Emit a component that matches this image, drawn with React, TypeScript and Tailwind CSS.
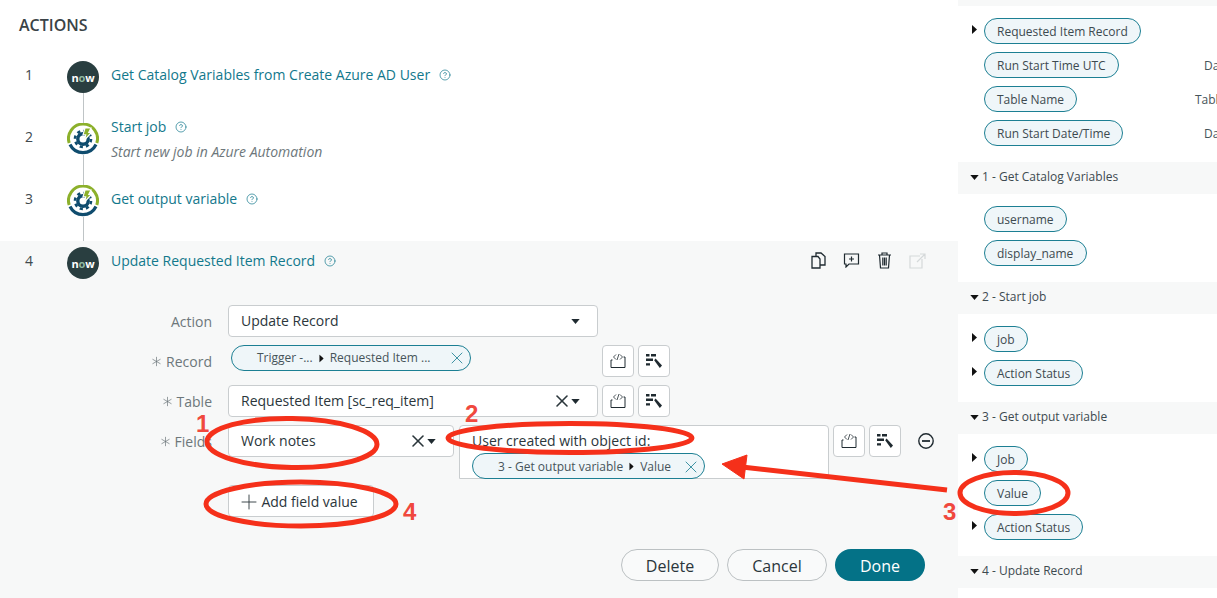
import { Asterisk, CircleHelp, Plus, X } from "lucide-react";
import { ReactNode } from "react";

const NowIcon = () => (
  <div className="w-8 h-8 shrink-0 rounded-full bg-[#293e40] flex items-center justify-center text-white text-[11px] font-bold leading-none tracking-[-0.2px]">
    n<span className="text-[#8fb8a0]">o</span>w
  </div>
);

const AutomationIcon = () => (
  <svg viewBox="0 0 32 32" className="w-8 h-8 shrink-0">
    <circle cx="16" cy="16" r="16" fill="#fff" />
    <path d="M2.2 20 A14.5 14.5 0 1 1 29.8 20" fill="none" stroke="#8cb02b" strokeWidth="3" />
    <path d="M3 21.5 A14.5 14.5 0 0 0 29 21.5" fill="none" stroke="#0f4c6e" strokeWidth="3.2" />
    <circle cx="16" cy="16" r="5.2" fill="none" stroke="#0f4c6e" strokeWidth="3.4" />
    <circle cx="16" cy="16" r="8" fill="none" stroke="#0f4c6e" strokeWidth="2.6" strokeDasharray="3.2 3.1" />
    <path d="M18 5h6l-2.2 4.5h2.7L17.5 17l1.2-5.2H16z" fill="#8cb02b" stroke="#fff" strokeWidth="1.2" />
  </svg>
);

const Help = () => <CircleHelp size={12} strokeWidth={1.4} className="text-[#12788c] shrink-0" />;

const Caret = ({ className = "text-[#1f2a30]" }: { className?: string }) => (
  <svg viewBox="0 0 10 6" className={`w-[9px] h-[5px] shrink-0 fill-current ${className}`}>
    <path d="M0 0h10L5 6z" />
  </svg>
);

const SideCaret = () => (
  <svg viewBox="0 0 5 9" className="w-[5px] h-[9px] fill-[#111]">
    <path d="M0 0l5 4.5L0 9z" />
  </svg>
);

const CodeIcon = () => (
  <svg viewBox="0 0 16 14" className="w-4 h-[14px] fill-none stroke-[#1f2a30]" strokeWidth="1">
    <path d="M2.5 6H1v7.5h14V3h-1.5" />
    <path d="M6 0.5L3.5 3L6 5.5M10 0.5L12.5 3L10 5.5M9 0L7 6" strokeWidth="0.8" />
  </svg>
);

const WandIcon = () => (
  <svg viewBox="0 0 16 14" className="w-4 h-[14px] fill-[#1f2a30]">
    <path d="M0 0h3.5v2.4H0zM5 0h5v2.4H5zM0 4.6h7v2.4H0zM0 9.2h4v2.4H0z" />
    <path d="M8.2 6.2L9.6 4.6 16 11.6 13.8 14z" />
  </svg>
);

const ToolButton = ({ children }: { children: ReactNode }) => (
  <div className="w-8 h-8 shrink-0 bg-white border border-[#c9cdcf] rounded flex items-center justify-center">
    {children}
  </div>
);

const ToolPair = () => (
  <div className="flex gap-1">
    <ToolButton>
      <CodeIcon />
    </ToolButton>
    <ToolButton>
      <WandIcon />
    </ToolButton>
  </div>
);

const Step = ({
  n,
  icon,
  first,
  active,
  children,
  textClass,
}: {
  n: number;
  icon: ReactNode;
  first?: boolean;
  active?: boolean;
  children: ReactNode;
  textClass: string;
}) => (
  <div className="h-[62px] flex pl-[25px]">
    <div className="w-[42px] pt-[10px] text-sm leading-5 text-[#40494d]">{n}</div>
    <div className="w-8 flex flex-col items-center">
      <div className={`w-px h-[6px] ${first ? "" : "bg-[#bfc4c6]"}`} />
      {icon}
      {!active && <div className="w-px flex-1 bg-[#bfc4c6]" />}
    </div>
    <div className={`ml-3 ${textClass}`}>{children}</div>
  </div>
);

const Title = ({ children }: { children: ReactNode }) => (
  <div className="flex items-center gap-[9px] text-sm leading-5 text-[#12788c]">
    <span>{children}</span>
    <Help />
  </div>
);

const Label = ({ text, required }: { text: string; required?: boolean }) => (
  <div className="w-[212px] shrink-0 h-8 pt-px flex items-center justify-end gap-[1px] text-sm text-[#6d777b]">
    {required && <Asterisk size={17} strokeWidth={1} />}
    {text}
  </div>
);

const Select = ({ text, width, clear }: { text: string; width: string; clear?: boolean }) => (
  <div className={`${width} h-8 shrink-0 bg-white border border-[#c9cdcf] rounded flex items-center pl-3 pr-[17px] text-sm text-[#2b363b]`}>
    <span className="flex-1">{text}</span>
    {clear && <X size={20} strokeWidth={1.9} className="text-[#2b363b] mr-[-1px]" />}
    <Caret />
  </div>
);

const PillChip = ({ parts, className }: { parts: string[]; className: string }) => (
  <div className={`h-[26px] rounded-full border border-[#1c7f93] bg-[#eff6f9] flex items-center text-xs text-[#46545a] ${className}`}>
    <span>{parts[0]}</span>
    <span className="mx-[6px] scale-90">
      <SideCaret />
    </span>
    <span className="flex-1">{parts[1]}</span>
    <X size={20} strokeWidth={1} className="text-[#1c7f93] mr-[3px]" />
  </div>
);

const Pill = ({
  name,
  width,
  expand,
  type,
  typeOffset,
}: {
  name: string;
  width: string;
  expand?: boolean;
  type?: string;
  typeOffset?: string;
}) => (
  <div className="h-[26px] flex items-center">
    <div className="w-[12px] ml-[14px] shrink-0 -mt-1">{expand && <SideCaret />}</div>
    <div className={`${width} shrink-0 h-[26px] rounded-full border border-[#1c7f93] bg-[#eff6f9] flex items-center pl-[12px] pt-px text-xs text-[#3d4a50] whitespace-nowrap`}>
      {name}
    </div>
    {type && <div className={`${typeOffset} pt-px text-xs text-[#46545a] whitespace-nowrap`}>{type}</div>}
  </div>
);

const Section = ({ title, children }: { title: string; children: ReactNode }) => (
  <>
    <div className="h-8 bg-[#f7f8f8] flex items-center pl-3 pb-[2px] gap-[3px] text-xs text-[#3d4a50]">
      <Caret className="text-[#111]" />
      {title}
    </div>
    <div className="pt-3 pb-4 flex flex-col gap-2">{children}</div>
  </>
);

const Num = ({ children, className }: { children: ReactNode; className: string }) => (
  <span className={`absolute font-['Liberation_Sans',sans-serif] font-bold text-2xl leading-none text-[#f0483e] ${className}`}>
    {children}
  </span>
);

export default function App() {
  return (
    <div className="relative w-[1217px] h-[598px] overflow-hidden flex bg-white font-['Open_Sans',sans-serif]">
      <main className="w-[958px] shrink-0 flex flex-col">
        <h2 className="h-[55px] pl-[19px] pt-[15px] text-base leading-5 font-semibold text-[#3a4347]">ACTIONS</h2>
        <Step n={1} first icon={<NowIcon />} textClass="pt-[10px]">
          <Title>Get Catalog Variables from Create Azure AD User</Title>
        </Step>
        <Step n={2} icon={<AutomationIcon />} textClass="">
          <Title>Start job</Title>
          <p className="mt-[5px] text-sm leading-5 italic text-[#6d777b]">Start new job in Azure Automation</p>
        </Step>
        <Step n={3} icon={<AutomationIcon />} textClass="pt-[10px]">
          <Title>Get output variable</Title>
        </Step>

        <section className="flex-1 bg-[#f7f8f8] flex flex-col">
          <div className="flex items-start">
            <div className="flex-1">
              <Step n={4} first active icon={<NowIcon />} textClass="pt-[10px]">
                <Title>Update Requested Item Record</Title>
              </Step>
            </div>
            <div className="flex items-center gap-[17px] pt-[11px] pr-[32px] text-[#1f2a30]">
              <svg viewBox="0 0 15 17" className="w-[15px] h-[17px] fill-none stroke-current" strokeWidth="1.3">
                <path d="M1 4.5h6l2 2.5v9H1zM5 4.5V1h5l4 3.5V13H9" />
              </svg>
              <svg viewBox="0 0 17 15" className="w-[17px] h-[15px] fill-none stroke-current" strokeWidth="1.2">
                <path d="M1.5 1h14v10H6l-3 3v-3H1.5zM8.5 3.5v5M6 6h5" />
              </svg>
              <svg viewBox="0 0 15 17" className="w-[15px] h-[17px] fill-none stroke-current" strokeWidth="1.2">
                <path d="M1 3h13M5 3V1h5v2M2.5 3l1 13h8l1-13M5.8 5.5v8M7.5 5.5v8M9.2 5.5v8" />
              </svg>
              <svg viewBox="0 0 17 16" className="w-[17px] h-4 fill-none stroke-[#d5d9da]" strokeWidth="1.2">
                <path d="M11 3H1v12h12V6M8 9L16 1M11 1h5v5" />
              </svg>
            </div>
          </div>

          <div className="mt-[2px] flex flex-col gap-2">
            <div className="flex gap-4">
              <Label text="Action" />
              <Select text="Update Record" width="w-[370px]" />
            </div>
            <div className="flex gap-4">
              <Label text="Record" required />
              <div className="w-[374px] shrink-0 pl-[3px]">
                <PillChip parts={["Trigger -...", "Requested Item ..."]} className="w-[240px] pl-[25px]" />
              </div>
              <div className="ml-[-16px]">
                <ToolPair />
              </div>
            </div>
            <div className="flex gap-4">
              <Label text="Table" required />
              <div className="flex gap-1">
                <Select text="Requested Item [sc_req_item]" width="w-[370px]" clear />
                <ToolPair />
              </div>
            </div>
            <div className="flex gap-4">
              <Label text="Fields" required />
              <div className="flex gap-[5px]">
                <Select text="Work notes" width="w-[226px]" clear />
                <div className="w-[370px] h-[54px] bg-white border border-[#c9cdcf] rounded-t pl-3 pt-[5px]">
                  <div className="text-sm leading-5 text-[#2b363b]">User created with object id:</div>
                  <PillChip parts={["3 - Get output variable", "Value"]} className="w-[233px] pl-[25px] pt-px mt-[2px]" />
                </div>
                <div className="ml-[-1px] flex gap-1">
                  <ToolPair />
                </div>
                <div className="ml-[12px] h-8 flex items-center">
                  <svg viewBox="0 0 16 16" className="w-4 h-4 fill-none stroke-[#1f2a30]" strokeWidth="1.4">
                    <circle cx="8" cy="8" r="7.2" />
                    <path d="M4 8h8" strokeWidth="1.8" />
                  </svg>
                </div>
              </div>
            </div>
          </div>

          <div className="mt-[6px] pl-[228px]">
            <button className="w-[146px] h-8 pt-px bg-white border border-[#c9cdcf] rounded flex items-center justify-center text-sm text-[#2b363b]">
              <Plus size={24} strokeWidth={0.9} className="-ml-[7px]" />
              Add field value
            </button>
          </div>

          <div className="mt-8 pr-[33px] flex justify-end gap-2 text-base">
            <button className="w-[98px] h-8 pt-px rounded-full border border-[#bcc1c3] bg-[#f9fafa] text-[#2b363b]">Delete</button>
            <button className="w-[100px] h-8 pt-px rounded-full border border-[#bcc1c3] bg-[#f9fafa] text-[#2b363b]">Cancel</button>
            <button className="w-[90px] h-8 pt-px rounded-full bg-[#047287] text-white font-medium">Done</button>
          </div>
        </section>
      </main>

      <aside className="flex-1 min-w-0 overflow-hidden bg-white">
        <div className="h-[6px] bg-[#f7f8f8]" />
        <div className="pt-3 pb-4 flex flex-col gap-2">
          <Pill name="Requested Item Record" width="w-[157px]" expand />
          <Pill name="Run Start Time UTC" width="w-[135px]" type="Date/Time" typeOffset="ml-[85px]" />
          <Pill name="Table Name" width="w-[93px]" type="Table Name" typeOffset="ml-[118px]" />
          <Pill name="Run Start Date/Time" width="w-[139px]" type="Date/Time" typeOffset="ml-[81px]" />
        </div>
        <Section title="1 - Get Catalog Variables">
          <Pill name="username" width="w-[83px]" />
          <Pill name="display_name" width="w-[103px]" />
        </Section>
        <Section title="2 - Start job">
          <Pill name="job" width="w-[44px]" expand />
          <Pill name="Action Status" width="w-[99px]" expand />
        </Section>
        <Section title="3 - Get output variable">
          <Pill name="Job" width="w-[44px]" expand />
          <Pill name="Value" width="w-[57px]" />
          <Pill name="Action Status" width="w-[99px]" expand />
        </Section>
        <Section title="4 - Update Record">
          <div />
        </Section>
      </aside>

      {/* red markup drawn on top of the screenshot */}
      <svg viewBox="0 0 1217 598" className="absolute inset-0 w-[1217px] h-[598px] pointer-events-none fill-none stroke-[#f5301a]" strokeWidth="5">
        <ellipse cx="292" cy="443" rx="85" ry="24.5" transform="rotate(1 292 443)" />
        <ellipse cx="570" cy="438" rx="122" ry="14.5" />
        <ellipse cx="1014" cy="493" rx="54" ry="20.5" />
        <ellipse cx="301" cy="504" rx="95" ry="22" />
        <path d="M947 490L742 467" />
        <path d="M722 464L747 455L744 479Z" fill="#f5301a" strokeWidth="1" />
      </svg>
      <Num className="left-[196px] top-[412px]">1</Num>
      <Num className="left-[465px] top-[402px]">2</Num>
      <Num className="left-[943px] top-[500px]">3</Num>
      <Num className="left-[403px] top-[500px]">4</Num>
    </div>
  );
}
